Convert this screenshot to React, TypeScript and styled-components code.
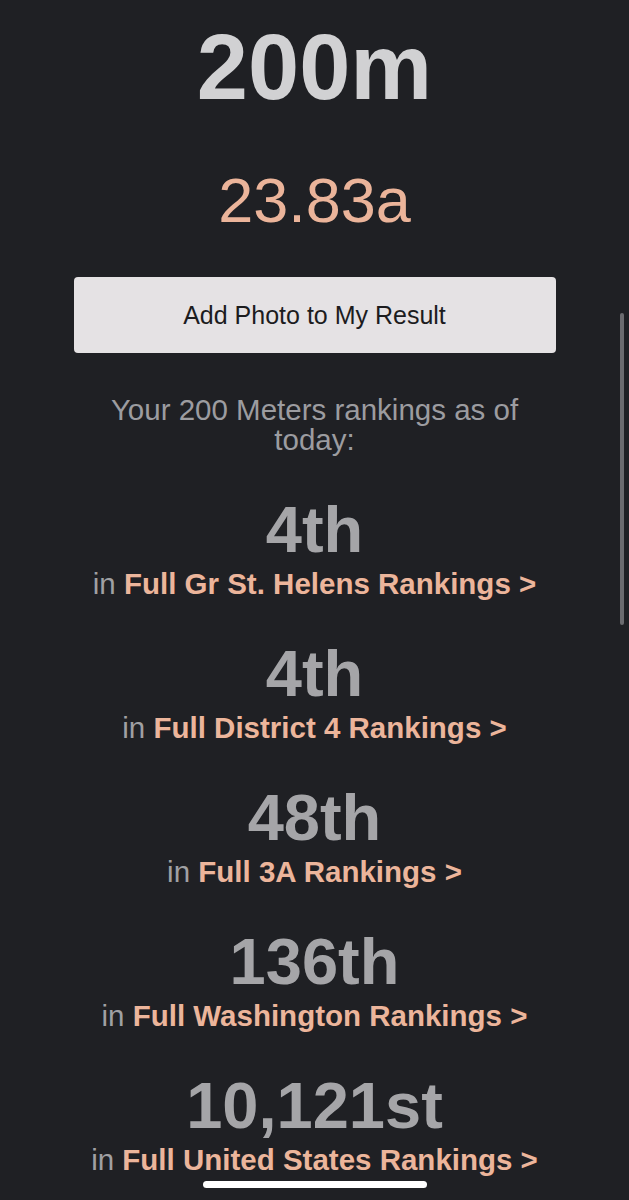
import React from 'react';
import styled, { createGlobalStyle } from 'styled-components';

const GlobalStyle = createGlobalStyle`
	html, body {
		margin: 0;
		padding: 0;
		background-color: #1f2024;
	}

	body {
		font-family: 'Liberation Sans', Arial, Helvetica, sans-serif;
	}
`;

const rankings = [
	{ place: '4th', label: 'Full Gr St. Helens Rankings >' },
	{ place: '4th', label: 'Full District 4 Rankings >' },
	{ place: '48th', label: 'Full 3A Rankings >' },
	{ place: '136th', label: 'Full Washington Rankings >' },
	{ place: '10,121st', label: 'Full United States Rankings >' },
];

const App = () => {
	return (
		<>
			<GlobalStyle />
			<Page>
				<Event>200m</Event>
				<Mark>23.83a</Mark>
				<PhotoButton type='button'>Add Photo to My Result</PhotoButton>
				<Intro>Your 200 Meters rankings as of today:</Intro>
				<Rankings>
					{rankings.map((r) => (
						<Ranking key={r.label}>
							<Place>{r.place}</Place>
							<Scope>
								in <RankLink href='#'>{r.label}</RankLink>
							</Scope>
						</Ranking>
					))}
				</Rankings>
			</Page>
			<ScrollThumb />
			<HomeIndicator />
		</>
	);
};

const Page = styled.main`
	width: 100%;
	height: 1200px;
	overflow: hidden;

	padding-top: 21px;
	box-sizing: border-box;

	display: flex;
	flex-direction: column;
	align-items: center;
	text-align: center;
`;

const Event = styled.h1`
	margin: 0;

	color: #d1d1d3;

	font-size: 92px;
	font-weight: 700;
	line-height: 1;
`;

const Mark = styled.div`
	margin-top: 56px;

	color: #ebb49a;

	font-size: 63px;
	line-height: 1;
`;

const PhotoButton = styled.button`
	width: 482px;
	height: 76px;
	margin-top: 45px;

	color: #1c1c1e;
	background-color: #e5e2e4;

	font-family: inherit;
	font-size: 25px;

	border: none;
	border-radius: 4px;
`;

const Intro = styled.p`
	max-width: 440px;
	margin: 42px 0 0;

	color: #9c9ca0;

	font-size: 29.5px;
	line-height: 30px;
`;

const Rankings = styled.section`
	margin-top: 42px;

	display: flex;
	flex-direction: column;
	gap: 40px;
`;

const Ranking = styled.div`
	display: flex;
	flex-direction: column;
	gap: 5px;
`;

const Place = styled.div`
	color: #a5a5a8;

	font-size: 65px;
	font-weight: 700;
	line-height: 1;
`;

const Scope = styled.div`
	color: #a0a0a3;

	font-size: 29.5px;
	line-height: 34px;
	white-space: nowrap;
`;

const RankLink = styled.a`
	color: #ecb59b;

	font-weight: 700;
	text-decoration: none;
`;

const ScrollThumb = styled.div`
	position: fixed;
	top: 313px;
	left: 620px;

	width: 4px;
	height: 312px;

	background-color: #6b6b6f;
	border-radius: 2px;
`;

const HomeIndicator = styled.div`
	position: fixed;
	top: 1181px;
	left: 203px;

	width: 224px;
	height: 7px;

	background-color: #ffffff;
	border-radius: 4px;
`;

export default App;
